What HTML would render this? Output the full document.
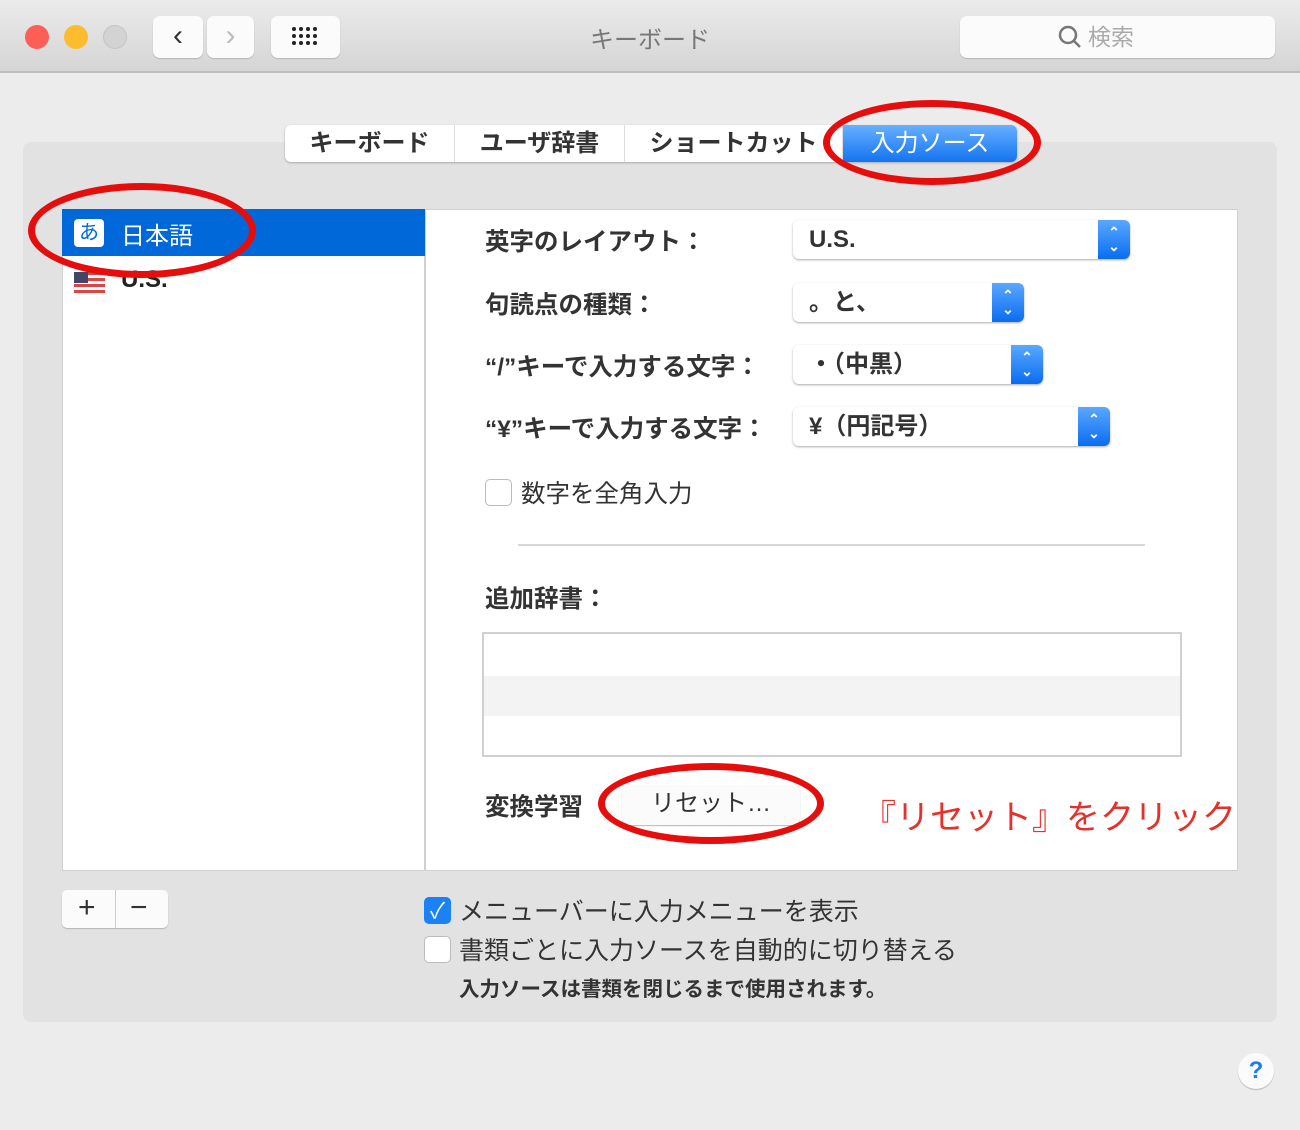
<!DOCTYPE html>
<html><head><meta charset="utf-8"><style>
*{box-sizing:border-box;margin:0;padding:0}
body{width:1300px;height:1130px;background:#ececec;position:relative;overflow:hidden;font-family:"Liberation Sans","Noto Sans CJK JP",sans-serif;color:#333}
.a{position:absolute}
.tb{left:0;top:0;width:1300px;height:73px;background:linear-gradient(#ebebeb,#d5d5d5);border-bottom:2px solid #bdbdbd}
.dot{width:24px;height:24px;border-radius:50%;top:25px}
.btn{background:#fbfbfb;border-radius:7px;box-shadow:0 1px 1px #b5b5b5}
.grp{left:23px;top:142px;width:1254px;height:880px;background:#e2e2e2;border-radius:8px}
.tabs{left:285px;top:125px;height:37px;display:flex;background:#fff;border-radius:6px;box-shadow:0 1px 2px #aaa;font-size:24px;font-weight:bold;color:#333}
.tabs div{line-height:37px;border-right:1px solid #ddd;text-align:center}
.pop{height:39px;background:#fff;border-radius:6px;box-shadow:0 1px 2px #aaa;font-size:24px;font-weight:bold;padding-left:16px;line-height:39px;color:#333}
.pop i{position:absolute;right:0;top:0;width:32px;height:39px;background:linear-gradient(#5aa8ff,#0a6df0);border-radius:0 6px 6px 0;color:#fff;font-style:normal;font-size:14px;line-height:14px;text-align:center;padding-top:5px}
.lbl{font-size:24.5px;font-weight:bold;color:#333}
.cb{width:27px;height:27px;background:#fff;border:1px solid #bbb;border-radius:5px}
.ell{border:7px solid #e60d0d;border-radius:50%}
</style></head><body>
<div class="a tb"></div>
<div class="a dot" style="left:25px;background:#fc5f57"></div>
<div class="a dot" style="left:64px;background:#fdbc2e"></div>
<div class="a dot" style="left:103px;background:#d3d3d3;border:1px solid #c4c4c4"></div>
<div class="a btn" style="left:153px;top:16px;width:50px;height:42px;font-size:30px;text-align:center;line-height:40px;color:#333">‹</div>
<div class="a btn" style="left:207px;top:16px;width:47px;height:42px;font-size:30px;text-align:center;line-height:40px;color:#bbb">›</div>
<div class="a btn" style="left:271px;top:16px;width:69px;height:42px"><svg width="69" height="42"><g fill="#222"><circle cx="23" cy="13" r="2"/><circle cx="30" cy="13" r="2"/><circle cx="37" cy="13" r="2"/><circle cx="44" cy="13" r="2"/><circle cx="23" cy="20" r="2"/><circle cx="30" cy="20" r="2"/><circle cx="37" cy="20" r="2"/><circle cx="44" cy="20" r="2"/><circle cx="23" cy="27" r="2"/><circle cx="30" cy="27" r="2"/><circle cx="37" cy="27" r="2"/><circle cx="44" cy="27" r="2"/></g></svg></div>
<div class="a" style="left:560px;top:20px;width:180px;text-align:center;font-size:24px;color:#777">キーボード</div>
<div class="a btn" style="left:960px;top:16px;width:315px;height:42px;font-size:23px;color:#aaa;line-height:42px;padding-left:98px"><svg width="24" height="24" style="vertical-align:-4px;margin-right:6px"><circle cx="10" cy="10" r="8" fill="none" stroke="#777" stroke-width="2.5"/><path d="M16 16l6 6" stroke="#777" stroke-width="2.5"/></svg>検索</div>
<div class="a grp"></div>
<div class="a tabs"><div style="width:170px">キーボード</div><div style="width:170px">ユーザ辞書</div><div style="width:218px">ショートカット</div><div style="background:linear-gradient(#68b0ff,#1374f0);color:#fff;font-weight:normal;width:174px;border-radius:0 6px 6px 0;border:0">入力ソース</div></div>
<div class="a" style="left:62px;top:209px;width:363px;height:662px;background:#fff;border:1px solid #d0d0d0"></div>
<div class="a" style="left:62px;top:209px;width:363px;height:47px;background:#0068d9"></div>
<div class="a" style="left:74px;top:219px;width:30px;height:28px;background:#fff;border-radius:4px;color:#0068d9;font-size:20px;text-align:center;line-height:28px">あ</div>
<div class="a" style="left:121px;top:216px;font-size:24px;color:#fff">日本語</div>
<div class="a" style="left:74px;top:272px;width:31px;height:21px;background:repeating-linear-gradient(#d44 0 3px,#fff 3px 6px)"><div style="width:14px;height:11px;background:#446"></div></div>
<div class="a" style="left:121px;top:266px;font-size:24px;font-weight:bold;color:#222">U.S.</div>
<div class="a" style="left:425px;top:209px;width:813px;height:662px;background:#fff;border:1px solid #d0d0d0"></div>
<div class="a lbl" style="left:485px;top:223px">英字のレイアウト：</div>
<div class="a lbl" style="left:485px;top:286px">句読点の種類：</div>
<div class="a lbl" style="left:485px;top:348px">“/”キーで入力する文字：</div>
<div class="a lbl" style="left:485px;top:410px">“¥”キーで入力する文字：</div>
<div class="a pop" style="left:793px;top:220px;width:337px">U.S.<i>⌃<br>⌄</i></div>
<div class="a pop" style="left:793px;top:283px;width:231px">。と、<i>⌃<br>⌄</i></div>
<div class="a pop" style="left:793px;top:345px;width:250px">・（中黒）<i>⌃<br>⌄</i></div>
<div class="a pop" style="left:793px;top:407px;width:317px">¥（円記号）<i>⌃<br>⌄</i></div>
<div class="a cb" style="left:485px;top:479px"></div>
<div class="a lbl" style="left:521px;top:475px;font-weight:normal">数字を全角入力</div>
<div class="a" style="left:518px;top:544px;width:627px;height:2px;background:#d8d8d8"></div>
<div class="a lbl" style="left:485px;top:580px">追加辞書：</div>
<div class="a" style="left:482px;top:632px;width:700px;height:125px;background:#fff;border:2px solid #d0d0d0"><div style="margin-top:42px;height:40px;background:#f3f3f3"></div></div>
<div class="a lbl" style="left:485px;top:788px">変換学習</div>
<div class="a btn" style="left:622px;top:785px;width:178px;height:40px;font-size:24px;line-height:38px;text-align:center;color:#333">リセット…</div>
<div class="a" style="left:862px;top:790px;font-size:34px;color:#e8302a">『リセット』をクリック</div>
<div class="a btn" style="left:62px;top:890px;width:106px;height:38px;border-radius:5px;font-size:30px;line-height:36px;color:#333"><span style="position:absolute;left:16px">+</span><span style="position:absolute;left:53px;top:0;width:1px;height:38px;background:#ccc"></span><span style="position:absolute;left:68px">−</span></div>
<div class="a" style="left:424px;top:897px;width:27px;height:27px;background:#1a82f5;border-radius:5px;color:#fff;font-size:22px;text-align:center;line-height:27px">✓</div>
<div class="a" style="left:459px;top:892px;font-size:25px;color:#333">メニューバーに入力メニューを表示</div>
<div class="a cb" style="left:424px;top:936px"></div>
<div class="a" style="left:459px;top:931px;font-size:25px;color:#333">書類ごとに入力ソースを自動的に切り替える</div>
<div class="a" style="left:459px;top:972px;font-size:20.5px;font-weight:bold;color:#333">入力ソースは書類を閉じるまで使用されます。</div>
<div class="a btn" style="left:1238px;top:1053px;width:36px;height:36px;border-radius:50%;color:#1a7ef0;font-size:24px;text-align:center;line-height:36px;font-weight:bold">?</div>
<div class="a ell" style="left:28px;top:183px;width:228px;height:95px"></div>
<div class="a ell" style="left:823px;top:100px;width:218px;height:85px"></div>
<div class="a ell" style="left:598px;top:763px;width:226px;height:81px"></div>
</body></html>
